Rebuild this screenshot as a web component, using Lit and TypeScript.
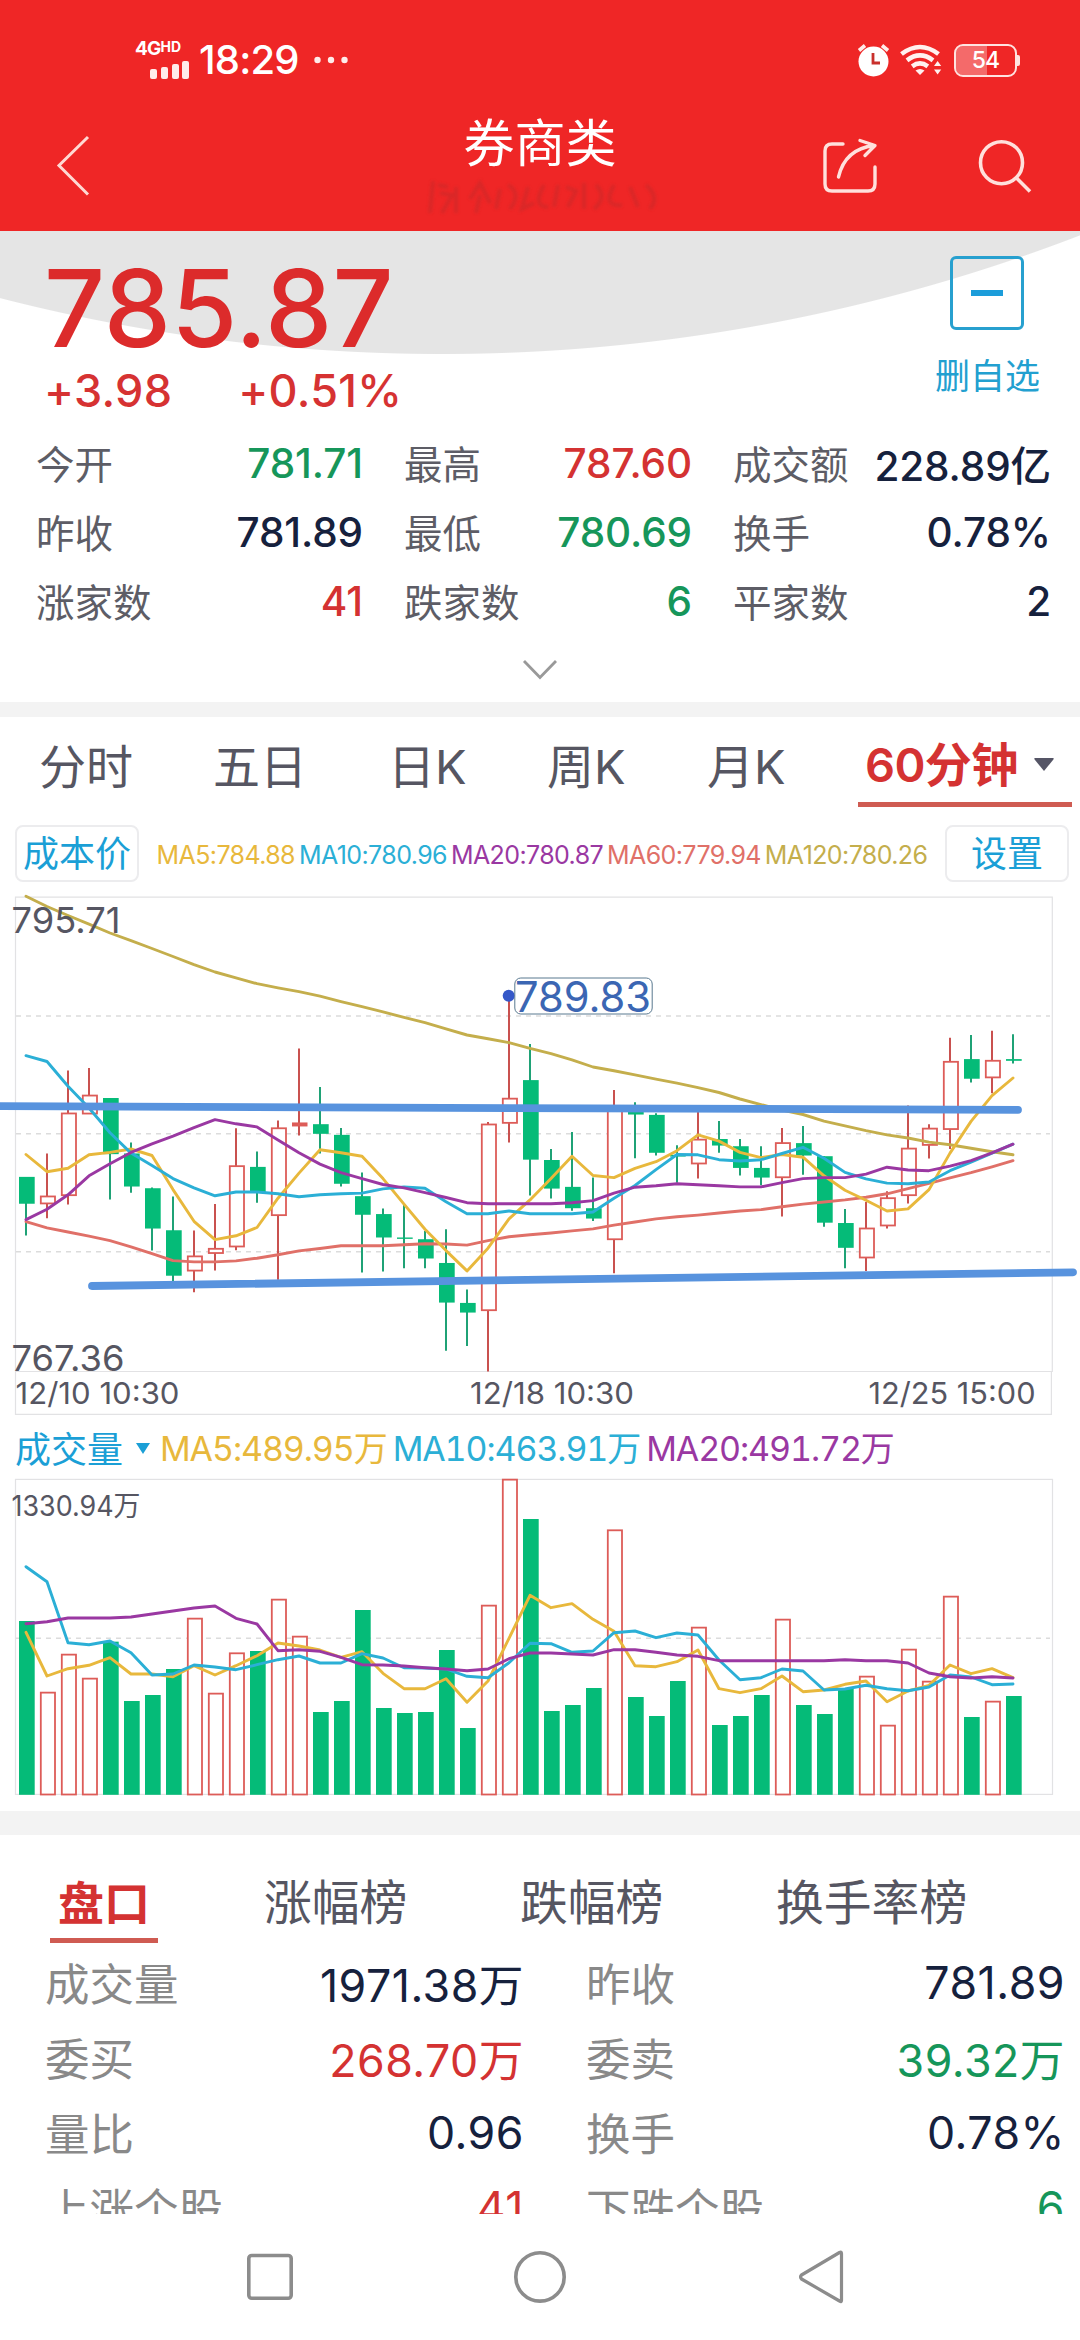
import { LitElement, html, svg, css } from "lit";
import { customElement, property } from "lit/decorators.js";
import { classMap } from "lit/directives/class-map.js";

type Tone = "up" | "down" | "flat";
type Cell = [string, string, Tone];
type Candle = [Tone, number, number, number, number];

const STEP = 21;
const FIRST_X = 26;
// Units per pixel of the two vertical scales.
const PRICE_UNIT = 2.9037;
const VOLUME_UNIT = 3;
const GREEN = "#05bb78";
const GREEN_WICK = "#1fa276";
const RED = "#dd5c58";
const RED_WICK = "#c9514f";
const YELLOW = "#e8b83c";
const CYAN = "#2bafd6";
const PURPLE = "#9a38a2";
const CORAL = "#e07068";
const OLIVE = "#c4ae4c";

// Tone, high, body top, body bottom, low.
const CANDLES: Candle[] = [
  ["down", 833, 833, 911, 1003], ["up", 765, 889, 911, 953], ["up", 524, 648, 887, 913], ["up", 517, 596, 650, 650],
  ["down", 604, 604, 767, 899], ["down", 733, 765, 861, 879], ["down", 864, 866, 983, 1047], ["down", 890, 988, 1120, 1137],
  ["up", 989, 1063, 1106, 1168], ["up", 912, 1041, 1055, 1105], ["up", 692, 801, 1036, 1046], ["down", 759, 804, 878, 908],
  ["up", 669, 691, 945, 1132], ["up", 460, 677, 684, 713], ["down", 572, 680, 708, 765], ["down", 691, 711, 853, 861],
  ["down", 820, 889, 943, 1111], ["down", 925, 941, 1009, 1108], ["down", 915, 1009, 1013, 1098], ["down", 990, 1014, 1070, 1098],
  ["down", 985, 1083, 1198, 1338], ["down", 1160, 1199, 1227, 1324], ["up", 674, 680, 1221, 1398], ["up", 320, 605, 677, 733],
  ["down", 447, 552, 783, 887], ["down", 752, 784, 867, 896], ["down", 703, 862, 924, 931], ["down", 835, 924, 954, 961],
  ["up", 581, 640, 1015, 1113], ["down", 616, 640, 652, 779], ["down", 648, 653, 763, 771], ["down", 741, 769, 774, 850],
  ["up", 640, 724, 795, 838], ["down", 671, 723, 742, 763], ["down", 723, 744, 807, 829], ["down", 744, 807, 835, 857],
  ["up", 691, 734, 835, 948], ["down", 685, 735, 771, 827], ["down", 773, 773, 966, 978], ["down", 926, 967, 1039, 1098],
  ["up", 906, 982, 1068, 1106], ["up", 875, 894, 975, 983], ["up", 626, 750, 887, 910], ["up", 680, 692, 741, 780],
  ["up", 429, 498, 695, 752], ["down", 421, 491, 548, 559], ["up", 409, 495, 545, 590], ["down", 419, 491, 496, 504],
];

const PRICE_LINES: [string, number[]][] = [
  [OLIVE, [18, 48, 74, 99, 125, 147, 170, 193, 217, 238, 255, 272, 284, 295, 308, 324, 339, 354, 370, 385, 403, 421, 432, 443, 460, 475, 493, 514, 525, 537, 549, 561, 574, 588, 607, 623, 639, 652, 671, 685, 699, 711, 720, 732, 740, 750, 760, 769]],
  [CORAL, [963, 981, 993, 1005, 1018, 1036, 1056, 1076, 1080, 1080, 1077, 1069, 1059, 1048, 1041, 1033, 1033, 1033, 1030, 1027, 1028, 1031, 1018, 1007, 1001, 996, 990, 984, 973, 964, 955, 949, 944, 938, 932, 928, 920, 912, 906, 900, 892, 882, 867, 852, 836, 821, 804, 786]],
  [YELLOW, [768, 818, 808, 769, 762, 752, 771, 870, 962, 1015, 1004, 980, 895, 822, 754, 763, 773, 838, 912, 985, 1047, 1106, 1040, 955, 900, 838, 773, 829, 835, 808, 789, 757, 711, 729, 762, 777, 768, 776, 830, 872, 901, 932, 926, 870, 764, 672, 597, 546]],
  [CYAN, [481, 498, 570, 633, 705, 764, 800, 838, 865, 888, 877, 877, 882, 891, 885, 882, 880, 868, 862, 866, 905, 940, 940, 932, 940, 940, 940, 935, 895, 858, 812, 768, 769, 783, 787, 783, 765, 747, 779, 820, 839, 851, 853, 848, 815, 790, 764, 738]],
  [PURPLE, [957, 927, 885, 830, 795, 762, 737, 715, 690, 667, 679, 688, 726, 763, 796, 821, 838, 855, 865, 879, 893, 908, 911, 911, 911, 911, 908, 902, 880, 863, 859, 853, 856, 859, 862, 862, 850, 838, 835, 835, 825, 805, 813, 815, 802, 786, 763, 738]],
];

const VOLUMES: [Tone, number][] = [
  ["down", 603], ["up", 817], ["up", 703], ["up", 775], ["down", 665], ["down", 843], ["down", 825], ["down", 747],
  ["up", 595], ["up", 820], ["up", 699], ["down", 693], ["up", 538], ["up", 649], ["down", 876], ["down", 843],
  ["down", 570], ["down", 864], ["down", 879], ["down", 876], ["down", 690], ["down", 924], ["up", 556], ["up", 178],
  ["down", 297], ["down", 873], ["down", 855], ["down", 804], ["up", 330], ["down", 831], ["down", 888], ["down", 783],
  ["up", 622], ["down", 915], ["down", 888], ["down", 825], ["up", 598], ["down", 855], ["down", 882], ["down", 805],
  ["up", 769], ["up", 916], ["up", 688], ["up", 784], ["up", 529], ["down", 891], ["up", 844], ["down", 828],
];

const VOLUME_LINES: [string, number[]][] = [
  [YELLOW, [637, 768, 746, 736, 713, 762, 762, 770, 737, 765, 737, 707, 669, 678, 690, 712, 695, 760, 806, 806, 776, 847, 783, 655, 526, 563, 551, 598, 634, 737, 740, 725, 690, 806, 818, 806, 768, 815, 810, 793, 783, 845, 813, 796, 735, 761, 746, 773]],
  [CYAN, [440, 485, 668, 674, 663, 698, 765, 762, 735, 741, 749, 734, 719, 708, 729, 729, 701, 714, 743, 744, 747, 769, 773, 728, 670, 671, 697, 693, 638, 633, 653, 639, 645, 720, 779, 773, 747, 753, 810, 807, 796, 806, 812, 801, 765, 771, 794, 792]],
  [PURPLE, [611, 605, 594, 594, 594, 591, 582, 573, 564, 558, 595, 612, 692, 689, 694, 712, 734, 735, 738, 743, 747, 752, 747, 716, 699, 699, 702, 705, 689, 689, 697, 705, 709, 722, 722, 722, 722, 722, 722, 719, 722, 722, 729, 759, 770, 774, 770, 774]],
];

const polyline = (values: number[], color: string, unit: number, top: number) => svg`
  <polyline fill="none" stroke=${color} stroke-width="2.9" stroke-linejoin="round" stroke-linecap="round"
    points=${values.map((v, i) => `${FIRST_X + STEP * i},${(v / unit - top).toFixed(1)}`).join(" ")} />`;

const bar = (tone: Tone, x: number, y1: number, y2: number) =>
  tone === "down"
    ? svg`<rect x=${x - 7} y=${y1} width="15.7" height=${y2 - y1} fill=${GREEN} />`
    : y2 - y1 < 4
      ? svg`<rect x=${x - 7} y=${y1 - 0.7} width="15.5" height="4" fill=${RED} />`
      : svg`<rect x=${x - 6.2} y=${y1 + 0.3} width="14.2" height=${y2 - y1 - 0.6} fill="#fff" stroke=${RED} stroke-width="1.8" />`;

@customElement("price-chart")
export class PriceChart extends LitElement {
  static styles = css`
    :host { display: block; }
    svg { display: block; overflow: visible; }
    text { font-family: Inter, "Noto Sans CJK SC", sans-serif; fill: #565662; }
    .scale { font-size: 36px; }
    .date { font-size: 30px; }
    .peak { font-size: 42px; fill: #3b66b3; }
  `;

  render() {
    return html`
      <svg width="1080" height="525" viewBox="0 0 1080 525">
        <path d="M15.5 7.2H1052.3V481.5H15.5ZM15.5 481.5V524.4H1051.4V481.5" fill="none" stroke="#e2e2e4" stroke-width="1.2" />
        ${[126, 243.8, 361.8].map((y) => svg`<path d=${`M16 ${y}H1050`} stroke="#dcdcdc" stroke-width="1.5" stroke-dasharray="5 5" />`)}
        ${CANDLES.map(([tone, high, open, close, low], i) => {
          const x = FIRST_X + STEP * i;
          return svg`
            <path d=${`M${x} ${high / PRICE_UNIT}V${low / PRICE_UNIT}`} stroke=${tone === "up" ? RED_WICK : GREEN_WICK} stroke-width="2" />
            ${bar(tone, x, open / PRICE_UNIT, close / PRICE_UNIT)}`;
        })}
        ${PRICE_LINES.map(([color, values]) => polyline(values, color, PRICE_UNIT, 0))}
        <g stroke="#5893de" stroke-width="7.8" stroke-linecap="round" fill="none">
          <path d="M-6 216.2L380 217.7L1018 219.8" />
          <path d="M92 396L1073 382.3" />
        </g>
        <circle cx="508.7" cy="105.8" r="6" fill="#3558c8" />
        <rect x="514.8" y="88" width="137.4" height="36" rx="6" fill="none" stroke="#58788f" stroke-width="1" />
        <text class="peak" x="515" y="122.3" textLength="136" lengthAdjust="spacingAndGlyphs">789.83</text>
        <text class="scale" x="11.5" y="43.4" textLength="109" lengthAdjust="spacingAndGlyphs">795.71</text>
        <text class="scale" x="11.5" y="481.3" textLength="113" lengthAdjust="spacingAndGlyphs">767.36</text>
        <text class="date" x="15.5" y="514.2" textLength="164" lengthAdjust="spacingAndGlyphs">12/10 10:30</text>
        <text class="date" x="470" y="514.2" textLength="164" lengthAdjust="spacingAndGlyphs">12/18 10:30</text>
        <text class="date" x="868.5" y="514.2" textLength="167" lengthAdjust="spacingAndGlyphs">12/25 15:00</text>
      </svg>`;
  }
}

@customElement("volume-chart")
export class VolumeChart extends LitElement {
  static styles = css`
    :host { display: block; }
    svg { display: block; overflow: visible; }
    text { font-family: Inter, "Noto Sans CJK SC", sans-serif; font-size: 28px; fill: #565662; }
  `;

  render() {
    return html`
      <svg width="1080" height="332" viewBox="0 0 1080 332">
        <rect x="15.5" y="0.4" width="1037" height="315" fill="none" stroke="#e2e2e4" stroke-width="1.2" />
        <path d="M16 159.2H1050" stroke="#dcdcdc" stroke-width="1.5" stroke-dasharray="5 5" />
        ${VOLUMES.map(([tone, top], i) => bar(tone, FIRST_X + STEP * i, top / VOLUME_UNIT - 59, 315.8))}
        ${VOLUME_LINES.map(([color, values]) => polyline(values, color, VOLUME_UNIT, 59))}
        <text x="11.5" y="37" textLength="129" lengthAdjust="spacingAndGlyphs">1330.94万</text>
      </svg>`;
  }
}

@customElement("stat-cell")
export class StatCell extends LitElement {
  @property({ attribute: false }) cell: Cell = ["", "", "flat"];

  static styles = css`
    :host { display: flex; justify-content: space-between; align-items: center; white-space: nowrap; }
    .label { color: var(--label-color); margin-bottom: 3px; }
    .value { font-size: var(--value-size); font-weight: var(--value-weight); letter-spacing: var(--value-track); color: #16213d; }
    .up { color: #d43232; }
    .down { color: #16965a; }
  `;

  render() {
    const [label, value, tone] = this.cell;
    return html`<span class="label">${label}</span>
      <span class=${classMap({ value: true, up: tone === "up", down: tone === "down" })}>${value}</span>`;
  }
}

@customElement("app-root")
export class AppRoot extends LitElement {
  private stats: Cell[] = [
    ["今开", "781.71", "down"], ["最高", "787.60", "up"], ["成交额", "228.89亿", "flat"],
    ["昨收", "781.89", "flat"], ["最低", "780.69", "down"], ["换手", "0.78%", "flat"],
    ["涨家数", "41", "up"], ["跌家数", "6", "down"], ["平家数", "2", "flat"],
  ];

  private details: Cell[] = [
    ["成交量", "1971.38万", "flat"], ["昨收", "781.89", "flat"],
    ["委买", "268.70万", "up"], ["委卖", "39.32万", "down"],
    ["量比", "0.96", "flat"], ["换手", "0.78%", "flat"],
    ["上涨个股", "41", "up"], ["下跌个股", "6", "down"],
  ];

  static styles = css`
    :host {
      display: flex; flex-direction: column; width: 1080px; height: 2340px; overflow: hidden; background: #fff;
      font-family: Inter, "Noto Sans CJK SC", sans-serif; color: #565662; white-space: nowrap;
    }
    * { box-sizing: border-box; }
    svg { display: block; flex: none; overflow: visible; }
    .head { height: 231px; flex: none; background: #ef2626; color: #fff; }
    .status { display: flex; align-items: center; height: 120px; padding: 0 60px 0 135px; }
    .net { display: grid; width: 56px; height: 37px; align-content: space-between; }
    .gen { display: flex; font-size: 19px; font-weight: 700; line-height: 14px; letter-spacing: -.8px; }
    .hd { font-size: 14px; line-height: 9px; letter-spacing: 0; }
    .net svg { margin-left: 15px; }
    .clock { margin-left: 8px; width: 103px; font-size: 40px; line-height: 120px; font-weight: 500; letter-spacing: -.8px; }
    .dots { margin-left: 12px; }
    .right { margin-left: auto; display: flex; align-items: center; }
    .wifi { margin: 0 12px 0 10px; }
    .battery { display: flex; align-items: center; }
    .cell { display: grid; place-items: center; width: 63px; height: 33px; border: 2.5px solid #ffe3e0; border-radius: 9px;
      background: linear-gradient(90deg, #f46a6a 0 31px, transparent 31px) 0 0 / 100% 100% no-repeat; background-clip: padding-box;
      font-size: 23px; font-weight: 500; line-height: 28px; letter-spacing: -1px; }
    .nub { width: 3px; height: 11px; border-radius: 0 2px 2px 0; background: #ffe3e0; }
    .bar { display: grid; grid-template-columns: 300px 1fr 300px; height: 111px; }
    .back { margin: 13px 0 0 52px; }
    .title { text-align: center; font-size: 51px; line-height: 48px; }
    .smudge { margin: 5px 0 0 124px; }
    .tools { display: flex; gap: 83px; padding: 16px 0 0 40px; }

    .quote { display: flex; justify-content: space-between; height: 198px; flex: none; padding: 18px 40px 0 44px;
      background: radial-gradient(circle 1775px at 442px -1652px, #e5e5e5 1774.5px, #fff 1775.5px); color: #dc2b2b; }
    .price { font-size: 107px; line-height: 118px; font-weight: 550; letter-spacing: .2px; }
    .delta { display: flex; gap: 66px; font-size: 45px; line-height: 48px; font-weight: 500; letter-spacing: .3px; color: #d63232; }
    .remove { display: flex; flex-direction: column; align-items: center; padding-top: 7px; font-size: 35px; line-height: 44px; color: #22a0d0; }
    .box { display: grid; place-items: center; width: 74px; height: 74px; margin-bottom: 24px; border: 3px solid #27a0cf; border-radius: 6px; }
    .minus { width: 32px; height: 6px; background: #1c9dda; }

    .stats { display: grid; grid-template-columns: 327px 288px 318px; grid-auto-rows: 69px; column-gap: 41px; height: 208px; flex: none;
      padding-left: 36px; font-size: 38.5px; --label-color: #5d5d66; --value-size: 40.5px; --value-weight: 500; --value-track: -.1px; }
    .expand { display: grid; justify-content: center; height: 65px; flex: none; padding-top: 22px; }
    .gap { flex: none; background: #f3f3f3; height: 15px; }
    .gap.tall { height: 24px; }

    .tabs { display: flex; align-items: flex-start; height: 98px; flex: none; padding-left: 39px; font-size: 47px; line-height: 100px; }
    .tab { flex: none; }
    .w1 { width: 174px; } .w2 { width: 175px; } .w3 { width: 159px; } .w4 { width: 160px; } .w5 { width: 151px; }
    .period { display: flex; align-items: center; justify-content: space-between; width: 214px; height: 90px; padding: 10px 18px 0 7px;
      border-bottom: 5px solid #cf5b52; color: #d43232; font-weight: 600; letter-spacing: -.6px; line-height: 76px; }

    .legend { display: flex; align-items: flex-start; height: 75px; flex: none; padding: 10px 11px 0 15px; justify-content: space-between; }
    .chip { display: grid; place-items: center; width: 124px; height: 57px; border: 2px solid #ececee; border-radius: 8px;
      font-size: 36px; line-height: 48px; color: #1b9fd6; }
    .averages { display: flex; gap: 4px; font-size: 25px; line-height: 60px; letter-spacing: -.6px; }
    .yellow { color: #e8b83c; } .cyan { color: #2bafd6; } .purple { color: #9a38a2; } .coral { color: #e07068; } .olive { color: #c4ae4c; }

    .volhead { display: flex; align-items: center; height: 64px; flex: none; padding: 4px 0 0 15px; line-height: 50px; color: #1b9fd6; }
    .volname { font-size: 36px; width: 121px; padding-top: 2px; }
    .volhead .averages { font-size: 34px; line-height: 50px; margin-left: 10px; gap: 6px; letter-spacing: -1.1px; font-variant-numeric: tabular-nums; }

    .boards { display: flex; height: 108px; flex: none; padding-left: 50px; font-size: 47.8px; line-height: 136px; }
    .board { width: 256px; flex: none; }
    .board.on { width: 108px; margin-right: 106px; text-align: center; font-size: 46px; font-weight: 700; color: #d43232;
      border-bottom: 5px solid #cf5b52; }
    .details { display: grid; grid-template-columns: 479px 479px; grid-auto-rows: 75px; column-gap: 62px; height: 271px; flex: none;
      overflow: hidden; padding: 2px 0 0 45px; font-size: 44.5px;
      --label-color: #898989; --value-size: 44.7px; --value-weight: 400; --value-track: .5px; }
    .nav { display: flex; height: 126px; flex: none; padding: 35px 0 0 245px; align-items: flex-start; }
    .home { margin: 0 229px 0 217px; }
  `;

  render() {
    return html`
      <header class="head">
        <div class="status">
          <div class="net">
            <div class="gen">4G<span class="hd">HD</span></div>
            <svg width="40" height="19" viewBox="0 0 40 19" fill="#ffecea">
              <rect x="0" y="9" width="7" height="10" rx="2" /><rect x="11" y="7" width="7" height="12" rx="2" />
              <rect x="22" y="4" width="7" height="15" rx="2" /><rect x="32" y="1" width="7" height="18" rx="2" />
            </svg>
          </div>
          <div class="clock">18:29</div>
          <svg class="dots" width="34" height="8" viewBox="0 0 34 8" fill="#ffecea">
            <circle cx="3.5" cy="4" r="3.2" /><circle cx="17" cy="4" r="3.2" /><circle cx="30.5" cy="4" r="3.2" />
          </svg>
          <div class="right">
            <svg width="33" height="34" viewBox="0 0 33 34">
              <circle cx="16.5" cy="18.5" r="15" fill="#fff" />
              <path d="M2 7.5L8 2.5M31 7.5L25 2.5" stroke="#ffecea" stroke-width="3.6" />
              <path d="M16 10V20H23" fill="none" stroke="#c9302c" stroke-width="2.8" />
            </svg>
            <svg class="wifi" width="42" height="34" viewBox="0 0 42 34">
              <g fill="none" stroke="#fff1ef" stroke-width="4.6">
                <path d="M1.5 11Q20 -3 38.5 11" /><path d="M7 17.3Q20 7.5 33 17.3" /><path d="M12.2 23.3Q20 17.6 27.8 23.3" />
              </g>
              <path d="M15.5 27.5Q20 24.5 24.5 27.5L20 32Z" fill="#fff1ef" />
              <path d="M34 23L37.6 18L41.2 23ZM34 26.5H41.2L37.6 31.5Z" fill="#fff1ef" />
            </svg>
            <div class="battery"><div class="cell">54</div><div class="nub"></div></div>
          </div>
        </div>
        <div class="bar">
          <svg class="back" width="42" height="66" viewBox="0 0 42 66"><path d="M36 4L7 32.5L36 61.5" fill="none" stroke="#ffd9d3" stroke-width="3" /></svg>
          <div class="title">券商类
            <svg class="smudge" width="240" height="46" viewBox="0 0 240 46" fill="none" stroke="#b92a2a" stroke-width="4" opacity=".42">
              <filter id="soft"><feGaussianBlur stdDeviation="1.6" /></filter>
              <path filter="url(#soft)" d="M9 8L6 40M14 12L24 14M16 20L28 22L18 40M32 14V40M46 26L56 10L66 30M56 22L52 40M76 16L72 36M84 12Q98 20 86 36M104 14L98 36L110 30M120 12Q108 34 124 34M134 12L130 34M142 14L152 18L144 34M160 10V36M172 12Q184 24 170 36M190 12Q178 34 198 32M206 14L214 34M222 12Q236 24 226 36" />
            </svg>
          </div>
          <div class="tools">
            <svg width="60" height="62" viewBox="0 0 60 62" fill="none" stroke="#ffe0dc" stroke-width="3.4" stroke-linecap="round">
              <path d="M23 8H12Q5 8 5 15V48Q5 55 12 55H48Q55 55 55 48V31" /><path d="M18.500 41Q25 13 54 9.500M40 4.500L55 9.500L45 19.500" stroke-linejoin="round" />
            </svg>
            <svg width="64" height="62" viewBox="0 0 64 62" fill="none" stroke="#ffe0dc" stroke-width="3.6">
              <circle cx="38.500" cy="26.700" r="21" /><path d="M52.500 41L67 55.500" />
            </svg>
          </div>
        </div>
      </header>

      <section class="quote">
        <div>
          <div class="price">785.87</div>
          <div class="delta"><span>+3.98</span><span>+0.51%</span></div>
        </div>
        <div class="remove"><div class="box"><div class="minus"></div></div>删自选</div>
      </section>
      <section class="stats">${this.stats.map((c) => html`<stat-cell .cell=${c}></stat-cell>`)}</section>
      <div class="expand"><svg width="36" height="22" viewBox="0 0 36 22"><path d="M2 2L18 18.500L34 2" fill="none" stroke="#999" stroke-width="2.800" /></svg></div>
      <div class="gap"></div>

      <nav class="tabs">
        <span class="tab w1">分时</span><span class="tab w2">五日</span><span class="tab w3">日K</span>
        <span class="tab w4">周K</span><span class="tab w5">月K</span>
        <span class="period">60分钟<svg width="20" height="13" viewBox="0 0 20 13"><path d="M1 0H19Q20.500 0 19 2L10 13L1 2Q-.5 0 1 0Z" fill="#555566" /></svg></span>
      </nav>
      <div class="legend">
        <span class="chip">成本价</span>
        <div class="averages">
          <span class="yellow">MA5:784.88</span><span class="cyan">MA10:780.96</span><span class="purple">MA20:780.87</span>
          <span class="coral">MA60:779.94</span><span class="olive">MA120:780.26</span>
        </div>
        <span class="chip">设置</span>
      </div>
      <price-chart></price-chart>
      <div class="volhead">
        <span class="volname">成交量</span>
        <svg width="14" height="12" viewBox="0 0 14 12"><path d="M0 0H14L7 11Z" fill="#1b9fd6" /></svg>
        <div class="averages"><span class="yellow">MA5:489.95万</span><span class="cyan">MA10:463.91万</span><span class="purple">MA20:491.72万</span></div>
      </div>
      <volume-chart></volume-chart>
      <div class="gap tall"></div>

      <nav class="boards">
        <span class="board on">盘口</span>
        <span class="board">涨幅榜</span><span class="board">跌幅榜</span><span class="board">换手率榜</span>
      </nav>
      <section class="details">${this.details.map((c) => html`<stat-cell .cell=${c}></stat-cell>`)}</section>
      <footer class="nav">
        <svg width="50" height="54" viewBox="0 0 50 54"><rect x="3.800" y="6.500" width="42.400" height="42.800" rx="3" fill="none" stroke="#8c8c8c" stroke-width="3.600" /></svg>
        <svg class="home" width="56" height="54" viewBox="0 0 56 54"><circle cx="28" cy="27.900" r="24.200" fill="none" stroke="#8c8c8c" stroke-width="3.600" /></svg>
        <svg width="50" height="56" viewBox="0 0 50 56"><path d="M44.500 4.500V51.500Q44.500 53.500 42.500 52L4.500 30Q2.500 28 4.500 26L42.500 3.500Q44.500 2.500 44.500 4.500Z" fill="none" stroke="#8c8c8c" stroke-width="3.200" stroke-linejoin="round" /></svg>
      </footer>`;
  }
}
